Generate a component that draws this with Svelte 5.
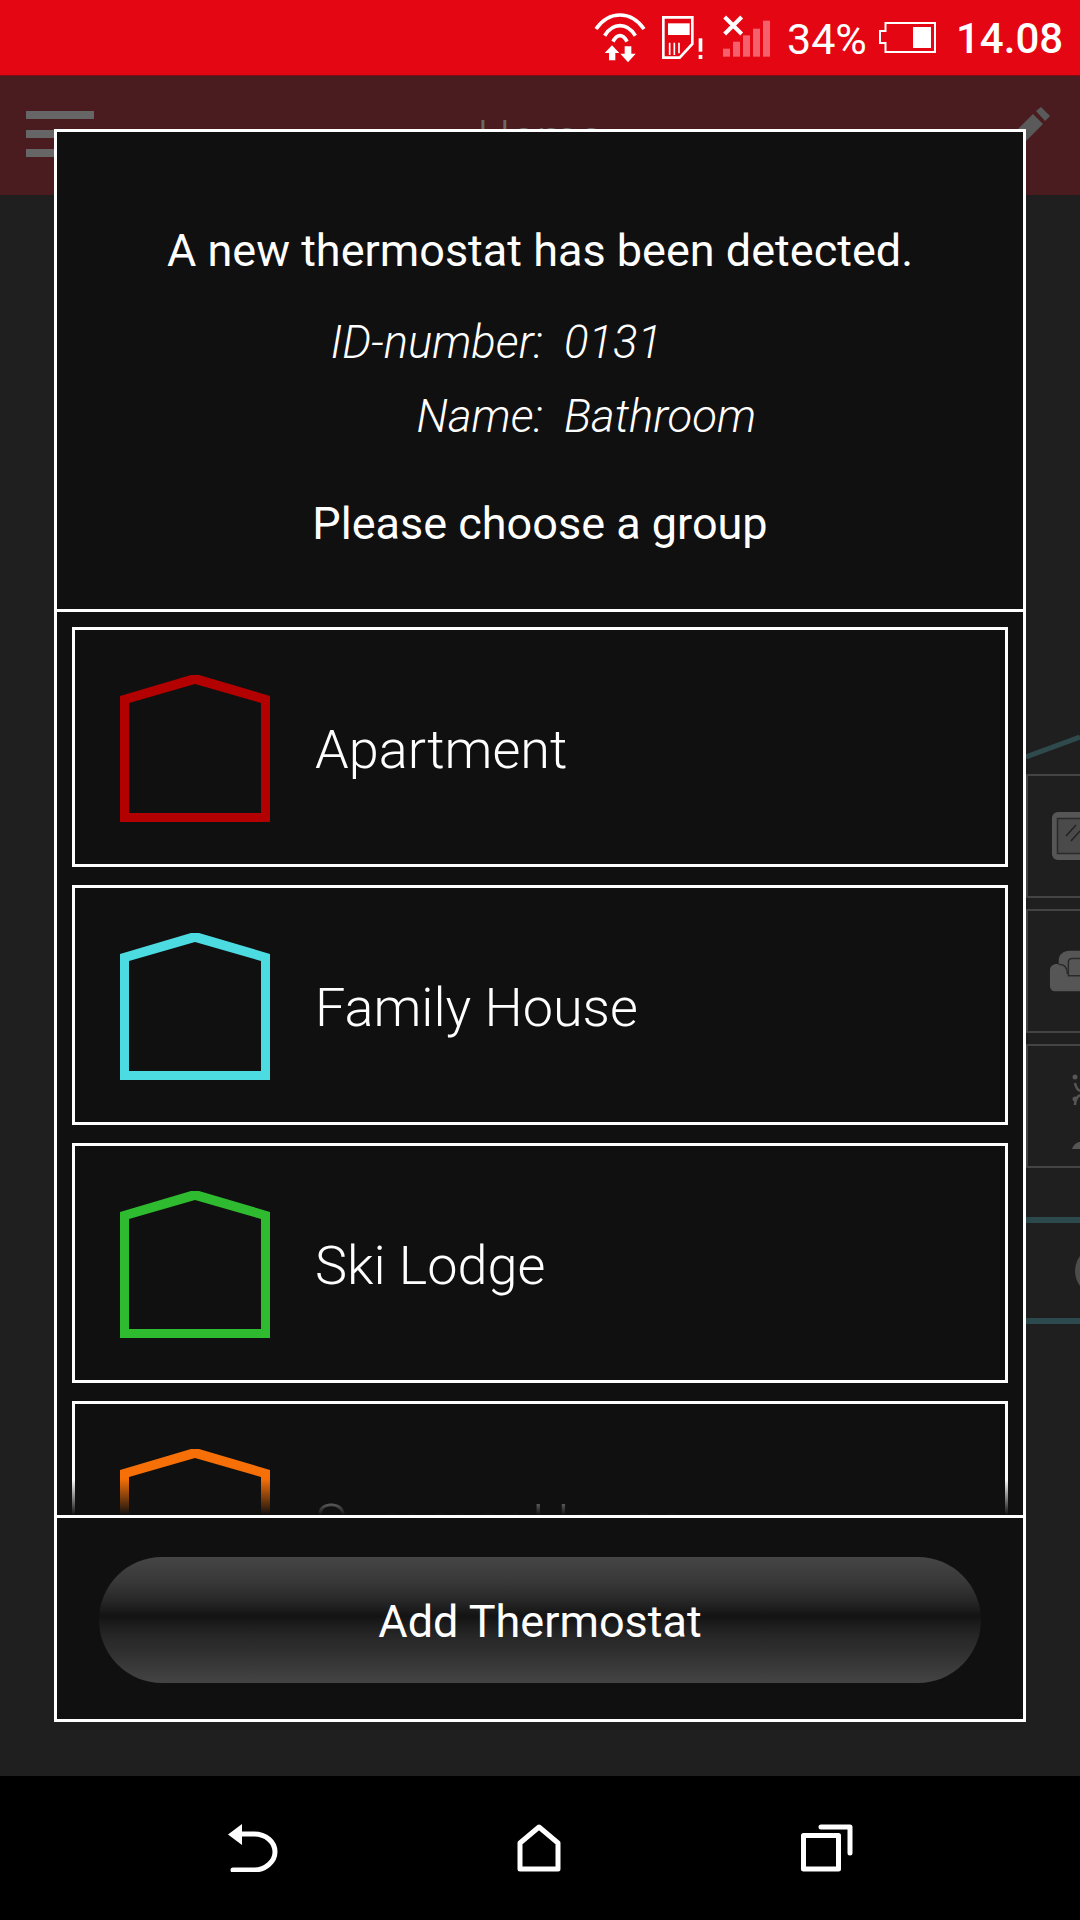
<script>
  const groups = [
    { name: 'Apartment', color: '#b30000' },
    { name: 'Family House', color: '#4cdbe0' },
    { name: 'Ski Lodge', color: '#2fbb2f' },
    { name: 'Summer House', color: '#f66f07' }
  ]
  const bars = [
    [429, 147, 21],
    [459, 126, 21],
    [489, 107, 21],
    [519, 87, 21],
    [549, 63, 21]
  ]
</script>

<div class="page">
  <header class="status">
    <svg class="wifi" width="52" height="50" viewBox="43 38 156 150" fill="none" stroke="#fff" stroke-width="11">
      <path d="M49 86 C88 30 154 30 193 86" />
      <path d="M75 106 C100 66 142 66 167 106" />
      <path d="M100 124 C112 100 130 100 142 124" />
      <path d="M97 135 L75 158 H88 V180 H107 V158 H119 Z" fill="#fff" stroke="none" />
      <path d="M135 138 H155 V160 H168 L145 186 L122 160 H135 Z" fill="#fff" stroke="none" />
    </svg>
    <svg class="sim" width="41" height="43" viewBox="247 48 123 129">
      <path d="M251 52 H338 V132 L300 173 H251 Z" fill="none" stroke="#fff" stroke-width="8" />
      <rect x="265" y="70" width="65" height="35" fill="#fff" />
      <path d="M270 128 V165 M284 128 V165 M298 128 V160" stroke="#fff" stroke-width="5" />
      <rect x="357" y="115" width="11" height="40" fill="#fff" />
      <rect x="357" y="165" width="11" height="12" fill="#fff" />
    </svg>
    <svg class="signal" width="47" height="43" viewBox="429 48 141 125">
      <path d="M434 52 L485 103 M485 52 L434 103" stroke="#fff" stroke-width="12" />
      {#each bars as [x, y, w]}
        <rect {x} {y} width={w} height={171 - y} fill="#f4606b" />
      {/each}
    </svg>
    <span class="pct">34%</span>
    <svg class="battery" width="57" height="31" viewBox="0 0 57 31">
      <path d="M6.5 1 H56 V30 H6.5 V21 H1 V9 H6.5 Z" fill="none" stroke="#fff" stroke-width="2" />
      <rect x="34" y="5" width="18" height="21" fill="#fff" />
    </svg>
    <span class="time">14.08</span>
  </header>

  <div class="appbar">
    <div class="burger"><i></i><i></i><i></i></div>
    <span class="title">Home</span>
    <svg class="pencil" width="38" height="38" viewBox="0 0 38 38">
      <path d="M24 4 L29 0 L38 9 L33 14 Z M21 7 L31 17 L10 38 L0 38 L0 28 Z" fill="#5a5a5a" />
    </svg>
  </div>

  <main class="content">
    <svg class="roof" width="54" height="25" viewBox="0 0 54 25">
      <path d="M0 22 L54 2" stroke="#2f4a4c" stroke-width="5" />
    </svg>
    <div class="room">
      <svg width="28" height="48" viewBox="0 0 28 48">
        <rect width="40" height="48" rx="6" fill="#565656" />
        <rect x="5.5" y="6.5" width="30" height="35" fill="#4a4a4a" stroke="#2a2a2a" stroke-width="1.5" />
        <path d="M14 24 L24 13 M19 29 L28 19" stroke="#222" stroke-width="1.5" />
      </svg>
    </div>
    <div class="room">
      <svg width="32" height="42" viewBox="0 0 32 42">
        <path d="M10 14 V10 C10 4 15 0 21 0 H32 V42 H7 C3 42 1 40 1 36 V20 C1 16 5 13 10 14 Z" fill="#565656" />
        <path d="M32 8 H24 C21 8 20 10 20 12 V26 H32" fill="none" stroke="#2a2a2a" stroke-width="1.5" />
        <path d="M10 14 C16 14 19 18 19 24" fill="none" stroke="#2a2a2a" stroke-width="1.5" />
      </svg>
    </div>
    <div class="room">
      <svg width="8" height="86" viewBox="0 0 8 86">
        <circle cx="3" cy="14" r="2.5" fill="#565656" />
        <circle cx="3" cy="36" r="2.5" fill="#565656" />
        <path d="M3 20 C4 25 6 27 8 28 M3 42 C3 36 6 33 8 32" stroke="#565656" stroke-width="2.5" fill="none" />
        <path d="M0 86 C2 81 5 79 8 79 V86 Z" fill="#565656" />
      </svg>
    </div>
    <div class="strip">
      <span class="dot"></span>
    </div>
  </main>

  <nav class="nav">
    <svg width="52" height="48" viewBox="0 0 52 48" fill="none" stroke="#fff" stroke-width="5" stroke-linecap="round">
      <path d="M6 46 H27 C39 46 48 37 48 28 C48 18 39 10 27 10 H12" />
      <path d="M1 10.5 L15 0 V21 Z" fill="#fff" stroke="none" />
    </svg>
    <svg width="46" height="48" viewBox="0 0 46 48" fill="none" stroke="#fff" stroke-width="5" stroke-linejoin="round">
      <path d="M3 45 V19 L22 3 L41 19 V45 Z" />
    </svg>
    <svg width="52" height="48" viewBox="0 0 52 48" fill="none" stroke="#fff" stroke-width="5" stroke-linejoin="round" stroke-linecap="round">
      <rect x="2.5" y="11.5" width="35" height="33.5" />
      <path d="M20 3 H49 V29" />
    </svg>
  </nav>

  <div class="dialog">
    <section class="intro">
      <p class="lead">A new thermostat has been detected.</p>
      <dl>
        <dt>ID-number:</dt>
        <dd>0131</dd>
        <dt>Name:</dt>
        <dd>Bathroom</dd>
      </dl>
      <p class="choose">Please choose a group</p>
    </section>

    <section class="groups">
      <div class="list">
        {#each groups as group}
          <button class="group">
            <svg width="150" height="147" viewBox="0 0 150 147">
              <path fill={group.color} fill-rule="evenodd" d="M0 21 L71 0 H79 L150 21 V147 H0 Z M9 28 V138 H141 V28 L75 9 Z" />
            </svg>
            <span>{group.name}</span>
          </button>
        {/each}
      </div>
      <div class="fade"></div>
    </section>

    <footer class="actions">
      <button class="add">Add Thermostat</button>
    </footer>
  </div>
</div>

<style>
  :global(body) {
    background: #1f1f1f;
  }

  .page {
    position: relative;
    display: flex;
    flex-direction: column;
    width: 1080px;
    height: 1920px;
    overflow: hidden;
    background: #1f1f1f;
    font-family: Roboto, "Liberation Sans", sans-serif;
    color: #fff;
  }

  .status {
    display: flex;
    align-items: center;
    height: 75px;
    flex: none;
    padding-left: 594px;
    background: #e40613;
    box-sizing: border-box;
  }

  .sim {
    margin-left: 16px;
  }

  .signal {
    margin-left: 20px;
    margin-top: -3px;
  }

  .pct {
    margin-left: 17px;
    padding-top: 2px;
    font-size: 43px;
    width: 79px;
    white-space: nowrap;
  }

  .battery {
    margin-left: 13px;
    margin-top: -1px;
  }

  .time {
    margin-left: 20px;
    padding-top: 2px;
    font-size: 42px;
    font-weight: 500;
  }

  .appbar {
    display: grid;
    grid-template-columns: 1fr auto 1fr;
    flex: none;
    align-items: start;
    height: 84px;
    padding: 35px 32px 0;
    background: #4a1c1f;
    border-top: 1px solid #7d0f14;
  }

  .burger {
    display: flex;
    flex-direction: column;
    gap: 11px;
    width: 68px;
    margin-left: -6px;
  }

  .burger i {
    display: block;
    height: 8px;
    background: #666;
  }

  .title {
    font-size: 47px;
    font-weight: 300;
    line-height: 52px;
    color: #6a6a6a;
  }

  .pencil {
    justify-self: end;
    margin-top: -4px;
    margin-right: -2px;
  }

  .content {
    flex: 1;
    min-height: 0;
    padding-left: 1026px;
  }

  .roof {
    display: block;
    margin-top: 540px;
  }

  .room {
    display: flex;
    align-items: center;
    height: 124px;
    margin-top: 11px;
    padding-left: 24px;
    box-sizing: border-box;
    border-top: 2px solid #444;
    border-bottom: 2px solid #444;
    border-left: 2px solid #444;
  }

  .roof + .room {
    margin-top: 14px;
  }

  .room:nth-of-type(2) {
    padding-left: 21px;
  }

  .room:nth-of-type(3) {
    padding-left: 44px;
  }

  .strip {
    display: flex;
    align-items: center;
    height: 107px;
    margin-top: 49px;
    padding-left: 49px;
    box-sizing: border-box;
    border-top: 6px solid #2c4a4e;
    border-bottom: 6px solid #2c4a4e;
  }

  .dot {
    width: 50px;
    height: 50px;
    flex: none;
    border-radius: 50%;
    background: #4d4d4d;
  }

  .nav {
    display: flex;
    flex: none;
    align-items: flex-start;
    justify-content: space-between;
    height: 144px;
    padding: 48px 227px 0 227px;
    box-sizing: border-box;
    background: #000;
  }

  .dialog {
    position: absolute;
    top: 129px;
    left: 54px;
    display: flex;
    flex-direction: column;
    width: 972px;
    height: 1593px;
    box-sizing: border-box;
    border: 3px solid #fff;
    background: #101010;
  }

  .intro {
    flex: none;
    height: 480px;
    padding-top: 89px;
    box-sizing: border-box;
    border-bottom: 3px solid #fff;
    text-align: center;
  }

  .lead,
  .choose {
    margin: 0;
    font-size: 45px;
    line-height: 60px;
  }

  .choose {
    margin-top: 41px;
  }

  dl {
    display: grid;
    grid-template-columns: 486px 1fr;
    grid-auto-rows: 74px;
    column-gap: 21px;
    align-items: center;
    margin: 24px 0 0;
    font-size: 45.5px;
    font-weight: 300;
    font-style: italic;
  }

  dt {
    text-align: right;
  }

  dd {
    margin: 0;
    text-align: left;
  }

  .groups {
    position: relative;
    flex: 1;
    min-height: 0;
    overflow: hidden;
  }

  .list {
    display: flex;
    flex-direction: column;
    gap: 18px;
    padding: 15px;
  }

  .group {
    display: flex;
    flex: none;
    align-items: center;
    gap: 45px;
    height: 240px;
    padding: 0 0 0 45px;
    box-sizing: border-box;
    border: 3px solid #fff;
    background: transparent;
    color: #fff;
    font: 300 54px Roboto, "Liberation Sans", sans-serif;
  }

  .group svg {
    flex: none;
    margin-top: 3px;
  }

  .group span {
    padding-top: 4px;
  }

  .fade {
    position: absolute;
    left: 0;
    right: 0;
    bottom: 0;
    height: 36px;
    background: linear-gradient(to bottom, rgba(16, 16, 16, 0), #101010);
  }

  .actions {
    flex: none;
    display: flex;
    align-items: center;
    justify-content: center;
    height: 204px;
    padding-top: 3px;
    box-sizing: border-box;
    border-top: 3px solid #fff;
  }

  .add {
    width: 882px;
    height: 126px;
    padding-top: 3px;
    border: none;
    border-radius: 63px;
    background: linear-gradient(to bottom, #454545 0%, #383838 20%, #282828 34%, #131313 47%, #1a1a1a 52%, #262626 62%, #303030 76%, #444 100%);
    color: #fff;
    font: 400 45px Roboto, "Liberation Sans", sans-serif;
  }
</style>
